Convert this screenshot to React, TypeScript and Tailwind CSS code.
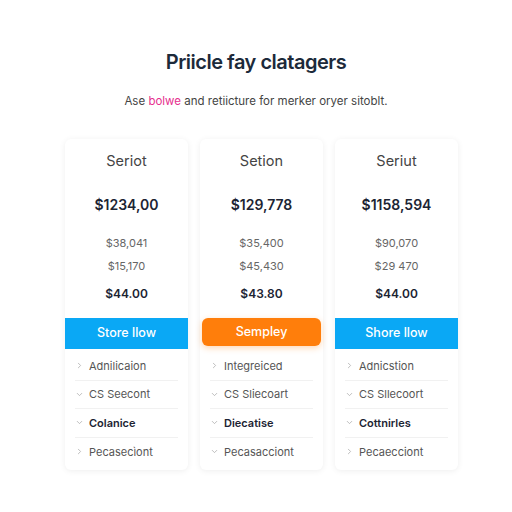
import { ChevronRight, ChevronDown } from "lucide-react";

interface Plan {
  name: string;
  price: string;
  lines: string[];
  total: string;
  cta: string;
  featured?: boolean;
  features: { label: string; open: boolean; bold?: boolean }[];
}

const plans: Plan[] = [
  {
    name: "Seriot",
    price: "$1234,00",
    lines: ["$38,041", "$15,170"],
    total: "$44.00",
    cta: "Store llow",
    features: [
      { label: "Adnilicaion", open: false },
      { label: "CS Seecont", open: true },
      { label: "Colanice", open: true, bold: true },
      { label: "Pecasecìont", open: false },
    ],
  },
  {
    name: "Setion",
    price: "$129,778",
    lines: ["$35,400", "$45,430"],
    total: "$43.80",
    cta: "Sempley",
    featured: true,
    features: [
      { label: "Integreiced", open: false },
      { label: "CS Sliecoart", open: true },
      { label: "Diecatise", open: true, bold: true },
      { label: "Pecasacciont", open: true },
    ],
  },
  {
    name: "Seriut",
    price: "$1158,594",
    lines: ["$90,070", "$29 470"],
    total: "$44.00",
    cta: "Shore llow",
    features: [
      { label: "Adnicstion", open: false },
      { label: "CS Sllecoort", open: true },
      { label: "Cottnirles", open: true, bold: true },
      { label: "Pecaecciont", open: false },
    ],
  },
];

export default function App() {
  return (
    <div className="min-h-screen w-[512px] bg-white text-[#1e293b]" style={{ fontFamily: "Inter, 'Noto Sans', sans-serif" }}>
      <div className="pt-[47px] text-center">
        <h1 className="text-[20px] font-semibold tracking-tight text-[#1c2a3a]">Priicle fay clatagers</h1>
        <p className="mt-[16px] text-[11.5px] text-[#444]">
          Ase <span className="text-[#e62f8e]">bolwe</span> and retiicture for merker oryer sitoblt.
        </p>
      </div>

      <div className="mt-[29px] flex gap-3 pl-[65px]">
        {plans.map((p) => (
          <div key={p.name} className="flex h-[331px] w-[123px] flex-col rounded-md bg-white shadow-[0_1px_6px_rgba(0,0,0,0.07)]">
            <div className="pt-[11px] text-center text-[14.5px] text-[#444]">{p.name}</div>
            <div className="mt-[22px] text-center text-[14px] font-semibold text-[#1c2433]">{p.price}</div>
            <div className="mt-[20px] text-center text-[11px] text-[#666]">{p.lines[0]}</div>
            <div className="mt-[6px] text-center text-[11px] text-[#666]">{p.lines[1]}</div>
            <div className="mt-[11px] text-center text-[12px] font-semibold text-[#1c2433]">{p.total}</div>
            {p.featured ? (
              <div className="mx-[2px] mt-[15px] flex h-[28px] items-center justify-center rounded-md bg-[#ff7e0b] text-[12.5px] font-medium text-white shadow-[0_2px_6px_rgba(255,126,11,0.3)]">
                {p.cta}
              </div>
            ) : (
              <div className="mt-[15px] flex h-[31px] items-center justify-center bg-[#0aa8f5] text-[12.5px] font-medium text-white">
                {p.cta}
              </div>
            )}
            <div className={`px-[10px] ${p.featured ? "pt-[6px]" : "pt-[3px]"}`}>
              {p.features.map((f, i) => (
                <div
                  key={f.label}
                  className={`flex h-[28.5px] items-center gap-[5px] text-[11px] ${i < 3 ? "border-b border-[#f1f1f1]" : ""} ${f.bold ? "font-semibold text-[#1c2433]" : "text-[#555]"}`}
                >
                  {f.open ? (
                    <ChevronDown className="h-[9px] w-[9px] text-[#aaa]" strokeWidth={2} />
                  ) : (
                    <ChevronRight className="h-[9px] w-[9px] text-[#aaa]" strokeWidth={2} />
                  )}
                  {f.label}
                </div>
              ))}
            </div>
          </div>
        ))}
      </div>
    </div>
  );
}
